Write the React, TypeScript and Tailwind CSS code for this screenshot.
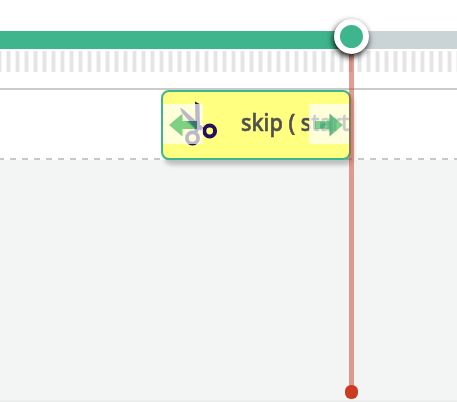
function Scissors() {
  return (
    <svg className="absolute left-[17px] top-[9px] h-[46px] w-[38px]" viewBox="0 0 38 46" fill="none" stroke="#24105a">
      <path d="M15 0.500 L19.500 3 L20 27 L16.500 33 L13.500 31.500 L15.500 25 Z" fill="#24105a" stroke="none" />
      <path d="M0 6.500 L4 9 L16 20 L24 27 L21 29.500 L14 26 L1.500 11 Z" fill="#24105a" stroke="none" />
      <circle cx="12.500" cy="37" r="5.600" strokeWidth="3.800" />
      <circle cx="29.700" cy="30" r="5.400" strokeWidth="4" />
    </svg>
  );
}

function Handle({ side }: { side: "left" | "right" }) {
  return (
    <div className={`absolute top-[12px] flex h-10 w-10 items-center justify-center bg-white/70 ${side === "left" ? "left-0" : "right-0 -scale-x-100"}`}>
      <svg className="mt-[2px] h-[24px] w-[28px] mix-blend-multiply" viewBox="0 0 28 24">
        <path d="M0 12 L13.500 0.500 V8 H28 V16 H13.500 V23.500 Z" fill="#2fb35c" fillOpacity=".62" />
        {side === "left" && <path d="M17 8 H28 V16 H26 Z" fill="#1b7a6e" fillOpacity=".5" />}
        {side === "right" && <path d="M10 4 L13.500 0.500 V23.500 L10 20 Z M18 9 H23 V15 H18 Z" fill="#1b7a6e" fillOpacity=".28" />}
      </svg>
    </div>
  );
}

export default function App() {
  return (
    <main className="relative flex h-[402px] w-[457px] flex-col overflow-hidden bg-white">
      <div className="mt-[31px] flex h-[18px] bg-[#cad3d6]">
        <div className="w-[351px] bg-[#3fb58d]" />
      </div>
      <div className="mt-[2px] h-[21px] bg-[repeating-linear-gradient(90deg,#f3f3f3_0px_1px,#e5e5e5_1px_4px,#f3f3f3_4px_5px,#fff_5px_9px)] bg-[position:6px_0] bg-[size:9px_100%]" />
      <div className="mt-4 h-[2px] bg-[#cacaca]" />
      <div className="h-[68px]">
        <div className="relative ml-[161px] flex h-[70px] w-[190px] items-center overflow-hidden rounded-lg border-2 border-[#3fb58d] bg-[#ffff80] shadow-[3px_5px_4px_rgba(0,0,0,.22)]">
          <Scissors />
          <span className="mb-[7px] ml-[78px] origin-left scale-x-[.9] whitespace-nowrap font-['Noto_Sans',sans-serif] text-[24px] font-medium text-[#505050] [-webkit-text-stroke:0.6px_#505050]">skip ( start</span>
          <Handle side="left" />
          <Handle side="right" />
        </div>
      </div>
      <div className="h-[2px] bg-[repeating-linear-gradient(90deg,#c8c8c8_0px_6px,transparent_6px_12px)] bg-[position:-2px_0] bg-[size:12px_100%]" />
      <div className="flex-1 bg-[#f3f5f4]" />
      <div className="h-[2px] bg-gradient-to-b from-[#eff1f0] to-[#e8eae9]" />
      <div className="absolute left-[349px] top-[50px] h-[340px] w-[5px] bg-[#cb3b23]/50" />
      <div className="absolute left-[345px] top-[385px] h-[14px] w-[13px] rounded-md bg-[#cb3b22]" />
      <div className="absolute left-[334px] top-[19px] h-[35px] w-[35px] rounded-full border-[6px] border-white bg-[#3fb58d] shadow-[-1px_3px_6px_rgba(0,0,0,.9)]" />
    </main>
  );
}
